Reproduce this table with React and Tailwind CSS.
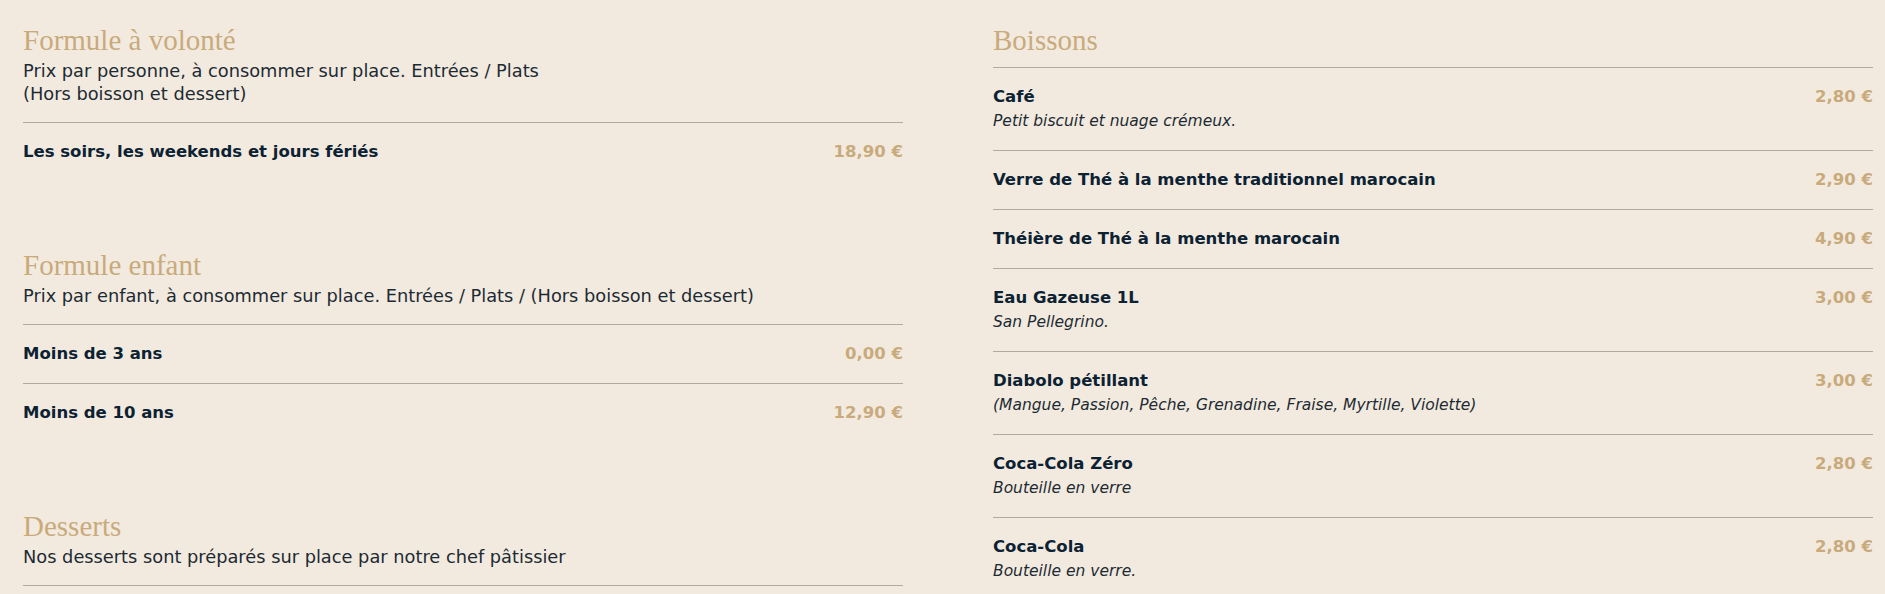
import React from 'react'

const serif = { fontFamily: '"Liberation Serif", "DejaVu Serif", serif' }

const formules = [
  {
    title: 'Formule à volonté',
    desc: ['Prix par personne, à consommer sur place. Entrées / Plats', '(Hors boisson et dessert)'],
    items: [{ name: 'Les soirs, les weekends et jours fériés', price: '18,90 €' }],
  },
  {
    title: 'Formule enfant',
    desc: ['Prix par enfant, à consommer sur place. Entrées / Plats / (Hors boisson et dessert)'],
    items: [
      { name: 'Moins de 3 ans', price: '0,00 €' },
      { name: 'Moins de 10 ans', price: '12,90 €' },
    ],
  },
  {
    title: 'Desserts',
    desc: ['Nos desserts sont préparés sur place par notre chef pâtissier'],
    items: [{ name: '', price: '' }],
  },
]

const boissons = [
  { name: 'Café', price: '2,80 €', note: 'Petit biscuit et nuage crémeux.' },
  { name: 'Verre de Thé à la menthe traditionnel marocain', price: '2,90 €' },
  { name: 'Théière de Thé à la menthe marocain', price: '4,90 €' },
  { name: 'Eau Gazeuse 1L', price: '3,00 €', note: 'San Pellegrino.' },
  { name: 'Diabolo pétillant', price: '3,00 €', note: '(Mangue, Passion, Pêche, Grenadine, Fraise, Myrtille, Violette)' },
  { name: 'Coca-Cola Zéro', price: '2,80 €', note: 'Bouteille en verre' },
  { name: 'Coca-Cola', price: '2,80 €', note: 'Bouteille en verre.' },
]

const Row = ({ item }) => (
  <div className="flex justify-between border-t border-[#b3aa9d] pt-[18px] pb-[18px]">
    <div>
      <div className="text-[16.5px] leading-[22px] font-bold text-[#0c2233]">{item.name}</div>
      {item.note && (
        <div className="mt-[3px] text-[15.5px] leading-[21px] italic text-[#1d2a33]">{item.note}</div>
      )}
    </div>
    <div className="text-[16.5px] leading-[22px] font-bold text-[#c9aa7c]">{item.price}</div>
  </div>
)

const Heading = ({ children }) => (
  <h2 style={serif} className="text-[29px] leading-[36px] text-[#c9aa7c]">{children}</h2>
)

export default function App() {
  return (
    <div
      className="h-[594px] overflow-hidden bg-[#f2eadf] pl-[23px] pt-[22px]"
      style={{ fontFamily: '"DejaVu Sans", sans-serif' }}
    >
      <div className="grid grid-cols-[880px_880px] gap-x-[90px]">
        <div>
          {formules.map((f, i) => (
            <section key={i} className="mb-[66px]">
              <Heading>{f.title}</Heading>
              <div className="mt-[1px] mb-[17px] text-[17.8px] leading-[23px] text-[#1d2a33]">
                {f.desc.map((d, j) => (
                  <div key={j}>{d}</div>
                ))}
              </div>
              {f.items.map((it, j) => (
                <Row key={j} item={it} />
              ))}
            </section>
          ))}
        </div>
        <div>
          <Heading>Boissons</Heading>
          <div className="mt-[9px]">
            {boissons.map((b, i) => (
              <Row key={i} item={b} />
            ))}
          </div>
        </div>
      </div>
    </div>
  )
}
